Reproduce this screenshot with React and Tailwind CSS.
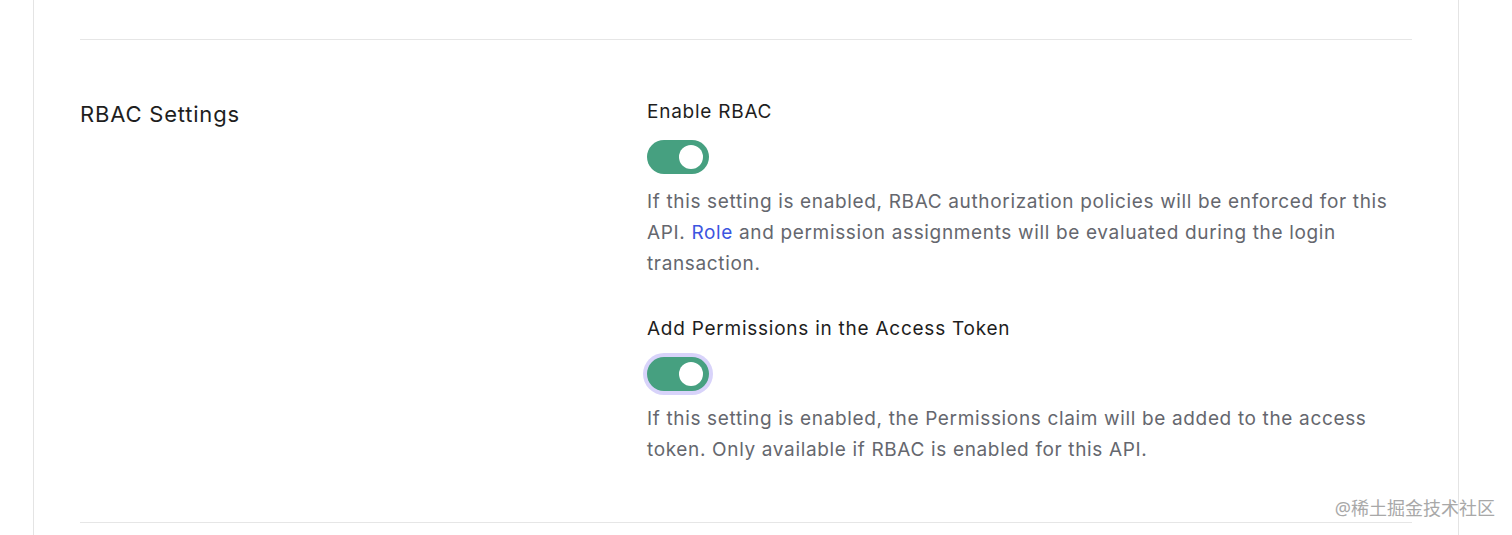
import React from "react";

const Toggle = ({ focused }) => (
  <div
    className={`flex h-[34px] w-[62px] items-center justify-end rounded-full bg-[#46a080] pr-[6px] ${
      focused ? "ring-4 ring-[#d8d3fa]" : ""
    }`}
  >
    <div className="h-[24px] w-[24px] rounded-full bg-white" />
  </div>
);

const Setting = ({ label, children, focused, className = "" }) => (
  <div className={className}>
    <div className="text-[19px] leading-[28px] tracking-[0.75px] text-[#1e1e1e]">{label}</div>
    <div className="mt-[14px]">
      <Toggle focused={focused} />
    </div>
    <p className="mt-[12px] text-[19px] leading-[31px] tracking-[0.65px] text-[#65676e]">
      {children}
    </p>
  </div>
);

export default function App() {
  return (
    <div
      className="relative min-h-screen bg-white"
      style={{ fontFamily: "Inter, 'Noto Sans', sans-serif" }}
    >
      <div className="ml-[33px] min-h-screen w-[1426px] border-x border-[#e4e4e4] pl-[46px] pr-[46px] pt-[39px]">
        <div className="border-y border-[#e6e6e6] pt-[58px] pb-[57px]">
          <div className="grid grid-cols-[567px_1fr]">
            <h2 className="mt-[1px] text-[22px] leading-[30px] tracking-[0.8px] text-[#1e1e1e]">
              RBAC Settings
            </h2>
            <div className="pr-[16px]">
              <Setting label="Enable RBAC">
                If this setting is enabled, RBAC authorization policies will be enforced for this
                API. <span className="text-[#3c55e0]">Role</span> and permission assignments will be
                evaluated during the login transaction.
              </Setting>
              <Setting label="Add Permissions in the Access Token" focused className="mt-[36px]">
                If this setting is enabled, the Permissions claim will be added to the access
                token. Only available if RBAC is enabled for this API.
              </Setting>
            </div>
          </div>
        </div>
      </div>
      <div
        className="absolute right-[17px] top-[496px] text-[18px] leading-[24px] text-[#a8a8a8]"
        style={{ fontFamily: "'Noto Sans', 'Noto Sans CJK SC', sans-serif" }}
      >
        @稀土掘金技术社区
      </div>
    </div>
  );
}
